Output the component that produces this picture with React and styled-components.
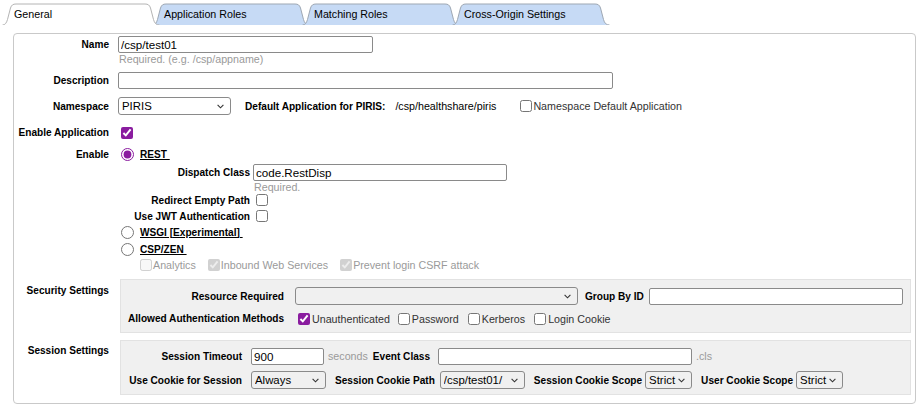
import React from 'react';
import styled, { createGlobalStyle } from 'styled-components';

const PURPLE = '#8a1c9f';
const FIELD_FONT = '"Liberation Sans", Arial, sans-serif';
const CHEVRON =
  "url(\"data:image/svg+xml,%3Csvg xmlns='http://www.w3.org/2000/svg' width='7' height='5' viewBox='0 0 7 5'%3E%3Cpath d='M0.6 0.8 L3.5 3.8 L6.4 0.8' fill='none' stroke='%23333' stroke-width='1.1'/%3E%3C/svg%3E\")";

const Global = createGlobalStyle`
  html, body { margin: 0; padding: 0; background: #fff; }
  body { font-family: "Liberation Sans", Arial, sans-serif; font-size: 10.7px; color: #000; }
  * { box-sizing: border-box; }
  input[type="checkbox"], input[type="radio"] { accent-color: ${PURPLE}; }
`;

const Page = styled.div`
  width: 923px;
  height: 411px;
  overflow: hidden;
  padding: 3px 0 0 2px;
`;

const TabBar = styled.div`
  display: flex;
  height: 22px;
`;

const TabItem = styled.div`
  position: relative;
  z-index: ${(p) => (p.$active ? 3 : 1)};
  width: 158px;
  height: 22px;
  margin-left: ${(p) => (p.$first ? 0 : -8)}px;
  display: flex;
  align-items: center;
  padding: 0 0 0 12px;
  font-size: 10.7px;
  color: #000;
  white-space: nowrap;
`;

const TabShape = styled.svg`
  position: absolute;
  inset: 0;
  width: 100%;
  height: 100%;
  z-index: -1;
`;

const Panel = styled.div`
  margin: 8px 0 0 11px;
  width: 903px;
  border: 1px solid #c9c9c9;
  border-radius: 4px;
  padding: 0 4px 8px 0;
`;

const Row = styled.div`
  display: grid;
  grid-template-columns: 96px 1fr;
  column-gap: 8px;
  align-items: ${(p) => (p.$top ? 'start' : 'center')};
  height: ${(p) => (p.$h ? `${p.$h}px` : 'auto')};
  margin-top: ${(p) => p.$mt || 0}px;
`;

const Label = styled.div`
  font-weight: bold;
  font-size: 10.1px;
  text-align: right;
  white-space: nowrap;
  padding-right: 1px;
  padding-top: ${(p) => p.$pt || 0}px;
`;

const Cell = styled.div`
  display: flex;
  align-items: center;
  gap: ${(p) => p.$gap || 0}px;
  padding-left: ${(p) => p.$pl || 0}px;
  min-width: 0;
  white-space: nowrap;
`;

const SubRow = styled.div`
  display: grid;
  grid-template-columns: 133px 1fr;
  column-gap: 2px;
  align-items: center;
`;

const TextInput = styled.input`
  width: ${(p) => (p.$w ? `${p.$w}px` : 'auto')};
  flex: ${(p) => (p.$grow ? 1 : 'none')};
  height: 17px;
  margin: 0;
  padding: 0 2px;
  border: 1px solid #8a8a8a;
  border-radius: 2px;
  background: #fff;
  font-family: ${FIELD_FONT};
  font-size: 11.6px;
  color: #000;
  outline: none;
`;

const Select = styled.select`
  appearance: none;
  -webkit-appearance: none;
  width: ${(p) => p.$w}px;
  height: 18px;
  margin: 0;
  padding: 0 14px 0 3px;
  border: 1px solid #8a8a8a;
  border-radius: 3px;
  background-color: transparent;
  background-image: ${CHEVRON};
  background-repeat: no-repeat;
  background-position: right 6px center;
  font-family: ${FIELD_FONT};
  font-size: 11.4px;
  color: #000;
`;

const Check = styled.input.attrs({ type: 'checkbox' })`
  width: 12px;
  height: 12px;
  margin: 0 ${(p) => (p.$mr != null ? p.$mr : 2)}px 0 ${(p) => (p.$ml != null ? p.$ml : 3)}px;
`;

const Radio = styled.input.attrs({ type: 'radio' })`
  width: 13px;
  height: 13px;
  margin: 0 6px 0 3px;
`;

const CheckLabel = styled.label`
  display: inline-flex;
  align-items: center;
  font-size: 10.7px;
  color: ${(p) => p.$color || '#333'};
  white-space: nowrap;
`;

const Strong = styled.span`
  font-weight: bold;
  font-size: 10.1px;
  white-space: nowrap;
`;

const Link = styled.span`
  font-weight: bold;
  font-size: 10.1px;
  text-decoration: underline;
  white-space: pre;
`;

const Hint = styled.span`
  font-size: ${(p) => p.$fs || 10.7}px;
  color: #9a9a9a;
  padding-left: ${(p) => p.$pl || 0}px;
  white-space: nowrap;
`;

const Plain = styled.span`
  font-size: 10.7px;
  color: #000;
  white-space: nowrap;
`;

const SettingsBox = styled.div`
  margin-left: 2px;
  background: #f0f0f0;
  border: 1px solid #e2e2e2;
  padding: ${(p) => p.$pt}px 7px ${(p) => p.$pb}px 7px;
`;

const BoxGrid = styled.div`
  display: grid;
  grid-template-columns: ${(p) => p.$lw}px 1fr;
  column-gap: ${(p) => p.$cg}px;
  row-gap: ${(p) => p.$rg}px;
  align-items: center;
`;

const BoxCell = styled.div`
  display: flex;
  align-items: center;
  height: ${(p) => p.$h}px;
  white-space: nowrap;
`;

const Gap = styled.span`
  display: inline-block;
  width: ${(p) => p.$w}px;
  flex: none;
`;

function Tab({ label, active, first }) {
  const fill = active ? '#ffffff' : '#c6daf5';
  const outline =
    'M0.5,22 C3,22 4.5,20 5.5,16.5 L8.5,5 C9.5,2 11,1 14,1 L143,1 C146,1 147.5,2 148.5,5 L151.5,16.5 C152.5,20 154,22 157.5,22';
  return (
    <TabItem $active={active} $first={first}>
      <TabShape viewBox="0 0 158 22" preserveAspectRatio="none">
        <path d={outline + ' Z'} fill={fill} stroke="none" />
        <path d={outline} fill="none" stroke={active ? '#b4b4b4' : '#9da7b3'} strokeWidth="1" />
      </TabShape>
      {label}
    </TabItem>
  );
}

export default function App() {
  return (
    <Page>
      <Global />
      <TabBar>
        <Tab label="General" active first />
        <Tab label="Application Roles" />
        <Tab label="Matching Roles" />
        <Tab label="Cross-Origin Settings" />
      </TabBar>

      <Panel>
        <Row $h={17} $mt={2}>
          <Label>Name</Label>
          <Cell>
            <TextInput $w={255} defaultValue="/csp/test01" />
          </Cell>
        </Row>
        <Row $h={11}>
          <div />
          <Cell>
            <Hint $pl={1}>Required. (e.g. /csp/appname)</Hint>
          </Cell>
        </Row>

        <Row $h={17} $mt={8}>
          <Label>Description</Label>
          <Cell>
            <TextInput $w={495} defaultValue="" />
          </Cell>
        </Row>

        <Row $h={18} $mt={8}>
          <Label>Namespace</Label>
          <Cell>
            <Select $w={113} defaultValue="PIRIS">
              <option>PIRIS</option>
            </Select>
            <Gap $w={14} />
            <Strong>Default Application for PIRIS:</Strong>
            <Gap $w={10} />
            <Plain>/csp/healthshare/piris</Plain>
            <Gap $w={21} />
            <CheckLabel $color="#333">
              <Check $ml={3} $mr={1} />
              Namespace Default Application
            </CheckLabel>
          </Cell>
        </Row>

        <Row $h={17} $mt={9}>
          <Label>Enable Application</Label>
          <Cell>
            <Check $ml={3} defaultChecked />
          </Cell>
        </Row>

        <Row $h={16} $mt={5}>
          <Label>Enable</Label>
          <Cell>
            <Radio name="enable" defaultChecked />
            <Link>{'REST\u00a0'}</Link>
          </Cell>
        </Row>

        <Row $h={17} $mt={2}>
          <div />
          <SubRow>
            <Label>Dispatch Class</Label>
            <Cell>
              <TextInput $w={254} defaultValue="code.RestDisp" />
            </Cell>
          </SubRow>
        </Row>
        <Row $h={10}>
          <div />
          <SubRow>
            <div />
            <Cell>
              <Hint $pl={1}>Required.</Hint>
            </Cell>
          </SubRow>
        </Row>
        <Row $h={16} $mt={1}>
          <div />
          <SubRow>
            <Label>Redirect Empty Path</Label>
            <Cell>
              <Check $ml={3} />
            </Cell>
          </SubRow>
        </Row>
        <Row $h={16}>
          <div />
          <SubRow>
            <Label>Use JWT Authentication</Label>
            <Cell>
              <Check $ml={3} />
            </Cell>
          </SubRow>
        </Row>

        <Row $h={16}>
          <div />
          <Cell>
            <Radio name="enable" />
            <Link>{'WSGI [Experimental]\u00a0'}</Link>
          </Cell>
        </Row>
        <Row $h={16} $mt={1}>
          <div />
          <Cell>
            <Radio name="enable" />
            <Link>{'CSP/ZEN\u00a0'}</Link>
          </Cell>
        </Row>
        <Row $h={16}>
          <div />
          <Cell $pl={22} $gap={12}>
            <CheckLabel $color="#9a9a9a">
              <Check $ml={0} $mr={1} disabled />
              Analytics
            </CheckLabel>
            <CheckLabel $color="#9a9a9a">
              <Check $ml={0} $mr={1} disabled defaultChecked />
              Inbound Web Services
            </CheckLabel>
            <CheckLabel $color="#9a9a9a">
              <Check $ml={0} $mr={1} disabled defaultChecked />
              Prevent login CSRF attack
            </CheckLabel>
          </Cell>
        </Row>

        <Row $top $mt={6}>
          <Label $pt={6}>Security Settings</Label>
          <SettingsBox $pt={7} $pb={5}>
            <BoxGrid $lw={157} $cg={10} $rg={5}>
              <Label>Resource Required</Label>
              <BoxCell $h={18}>
                <Select $w={283} defaultValue="">
                  <option value=""></option>
                </Select>
                <Gap $w={7} />
                <Strong>Group By ID</Strong>
                <Gap $w={5} />
                <TextInput $grow defaultValue="" />
              </BoxCell>
              <Label>Allowed Authentication Methods</Label>
              <BoxCell $h={17}>
                <CheckLabel>
                  <Check $ml={3} $mr={2} defaultChecked />
                  Unauthenticated
                </CheckLabel>
                <Gap $w={5} />
                <CheckLabel>
                  <Check $ml={3} $mr={2} />
                  Password
                </CheckLabel>
                <Gap $w={6} />
                <CheckLabel>
                  <Check $ml={3} $mr={2} />
                  Kerberos
                </CheckLabel>
                <Gap $w={6} />
                <CheckLabel>
                  <Check $ml={3} $mr={2} />
                  Login Cookie
                </CheckLabel>
              </BoxCell>
            </BoxGrid>
          </SettingsBox>
        </Row>

        <Row $top $mt={7}>
          <Label $pt={5}>Session Settings</Label>
          <SettingsBox $pt={6} $pb={5}>
            <BoxGrid $lw={115} $cg={8} $rg={6}>
              <Label>Session Timeout</Label>
              <BoxCell $h={18}>
                <TextInput $w={73} defaultValue="900" />
                <Gap $w={4} />
                <Hint>seconds</Hint>
                <Gap $w={5} />
                <Strong>Event Class</Strong>
                <Gap $w={8} />
                <TextInput $w={254} defaultValue="" />
                <Gap $w={4} />
                <Hint>.cls</Hint>
              </BoxCell>
              <Label>Use Cookie for Session</Label>
              <BoxCell $h={18}>
                <Select $w={75} defaultValue="Always">
                  <option>Always</option>
                </Select>
                <Gap $w={9} />
                <Strong>Session Cookie Path</Strong>
                <Gap $w={5} />
                <Select $w={85} defaultValue="/csp/test01/">
                  <option>/csp/test01/</option>
                </Select>
                <Gap $w={9} />
                <Strong>Session Cookie Scope</Strong>
                <Gap $w={3} />
                <Select $w={47} defaultValue="Strict">
                  <option>Strict</option>
                </Select>
                <Gap $w={9} />
                <Strong>User Cookie Scope</Strong>
                <Gap $w={3} />
                <Select $w={47} defaultValue="Strict">
                  <option>Strict</option>
                </Select>
              </BoxCell>
            </BoxGrid>
          </SettingsBox>
        </Row>
      </Panel>
    </Page>
  );
}
